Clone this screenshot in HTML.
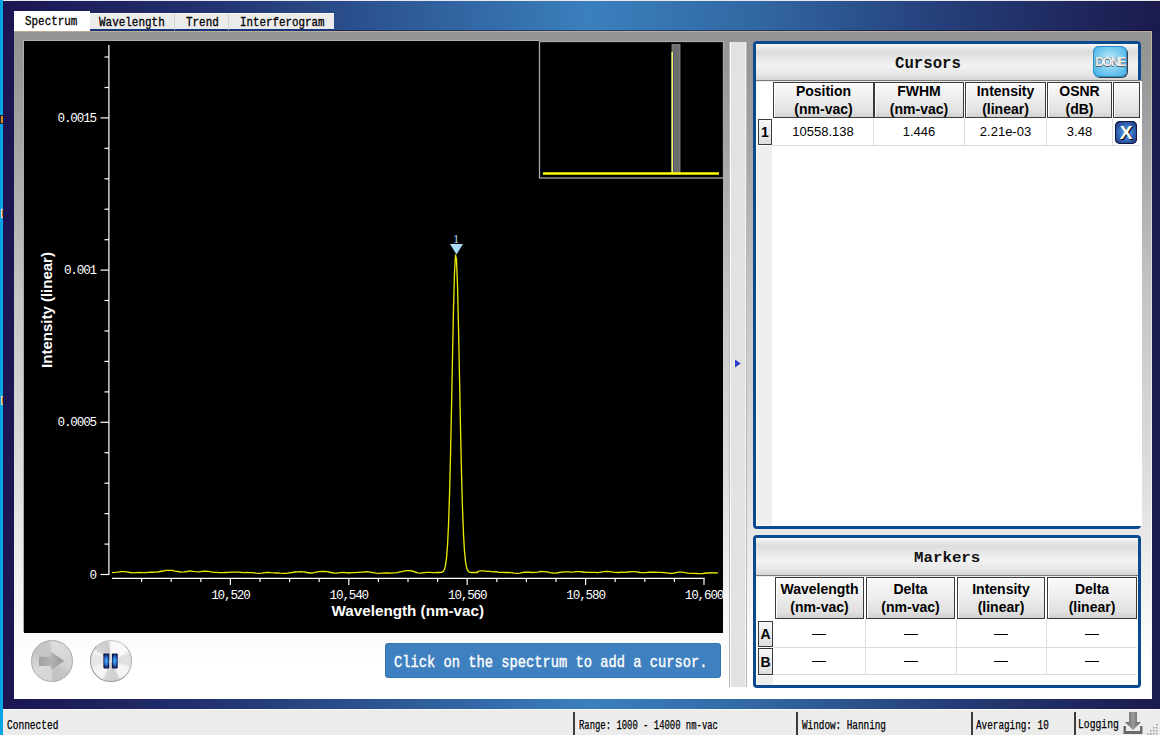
<!DOCTYPE html>
<html><head><meta charset="utf-8">
<style>
html,body{margin:0;padding:0;}
body{width:1160px;height:735px;position:relative;overflow:hidden;background:#1a1650;font-family:"Liberation Sans",sans-serif;}
.abs{position:absolute;}
.mt{position:absolute;font-family:"Liberation Mono",monospace;white-space:nowrap;transform-origin:0 0;}
#bg{left:0;top:0;width:1160px;height:735px;background:linear-gradient(to right,#1b1452 0px,#22306e 200px,#2c5592 380px,#3a80bd 590px,#3167a2 760px,#253d78 950px,#1b1a4c 1160px);}
.tab{position:absolute;top:13px;height:15px;background:#ebebeb;border-top:1px solid #fafafa;border-bottom:2px solid #16357a;}
.hb{position:absolute;box-sizing:border-box;border:1px solid #3a3a3a;background:linear-gradient(to bottom,#fafafa 0%,#ececec 50%,#e0e0e0 85%,#cfcfcf 100%);box-shadow:inset 1px 1px 0 #fff;font-weight:bold;font-size:14px;line-height:17.5px;text-align:center;color:#000;padding-top:0px;}
.rh{position:absolute;box-sizing:border-box;border:1px solid #3a3a3a;background:linear-gradient(to bottom,#f8f8f8,#dedede);font-weight:bold;font-size:14px;text-align:center;color:#000;}
.cell{position:absolute;font-size:13px;text-align:center;color:#000;}
.vl{position:absolute;width:1px;background:#dcdcdc;}
.hl{position:absolute;height:1px;background:#dcdcdc;}
.ph{position:absolute;background:linear-gradient(to bottom,#f4f4f4 0%,#dcdcdc 20%,#ececec 45%,#f2f2f2 60%,#e6e6e6 85%,#d4d4d4 100%);border-top:1px solid #fff8f0;}
.ssep{position:absolute;top:712px;width:2px;height:23px;background:#3c3c3c;}
svg text{font-family:"Liberation Mono",monospace;}
</style></head><body>
<div id="bg" class="abs"></div>
<div class="abs" style="left:0;top:0;width:1160px;height:1px;background:#e8e8ee;"></div>
<div class="abs" style="left:14px;top:30px;width:1139px;height:1px;background:rgba(0,0,40,0.45);"></div>
<div class="abs" style="left:0;top:0;width:3px;height:735px;background:#08a4e4;"></div>
<div class="abs" style="left:0;top:115px;width:3px;height:9px;background:#202020;"></div>
<div class="abs" style="left:1px;top:116px;width:2px;height:7px;background:#d08a30;"></div>
<div class="abs" style="left:1px;top:209px;width:2px;height:9px;background:#e8d8c0;"></div>
<div class="abs" style="left:2px;top:210px;width:1px;height:7px;background:#c87820;"></div>
<div class="abs" style="left:1px;top:396px;width:2px;height:9px;background:#e8d8c0;"></div>
<div class="abs" style="left:2px;top:397px;width:1px;height:7px;background:#c87820;"></div>

<!-- frame -->
<div class="abs" style="left:14px;top:31px;width:1138px;height:668px;background:linear-gradient(to bottom,#939393 0px,#979797 40px,#a8a8a8 130px,#c6c6c6 270px,#dedede 450px,#f2f2f2 560px,#ffffff 630px);"></div>
<div class="abs" style="left:14px;top:31px;width:1138px;height:1px;background:#b9ab98;"></div>
<div class="abs" style="left:1151px;top:31px;width:1px;height:668px;background:linear-gradient(to bottom,#c0b4a0,#d8d8d0 200px,#f8f8f8 500px);"></div>

<!-- tabs -->
<div class="abs" style="left:14px;top:11px;width:76px;height:20px;background:#fff;"></div>
<div class="tab" style="left:90px;width:84px;"></div>
<div class="tab" style="left:174px;width:54px;border-left:1px solid #d4d4d4;"></div>
<div class="tab" style="left:228px;width:105px;border-left:1px solid #d4d4d4;"></div>

<!-- chart -->
<div class="abs" style="left:24px;top:41px;width:699px;height:592px;background:#000;box-shadow:-1px -1px 0 #acacac;"></div>
<svg class="abs" style="left:0;top:0;" width="1160" height="735" viewBox="0 0 1160 735">
<g stroke="#ffffff" stroke-width="1.2" fill="none">
<line x1="108.9" y1="45" x2="108.9" y2="575"/>
<line x1="112" y1="578.4" x2="704.5" y2="578.4"/>
<line x1="100.5" y1="574.5" x2="109" y2="574.5"/>
<line x1="104.5" y1="544.1" x2="109" y2="544.1"/>
<line x1="104.5" y1="513.6" x2="109" y2="513.6"/>
<line x1="104.5" y1="483.2" x2="109" y2="483.2"/>
<line x1="104.5" y1="452.7" x2="109" y2="452.7"/>
<line x1="100.5" y1="422.3" x2="109" y2="422.3"/>
<line x1="104.5" y1="391.9" x2="109" y2="391.9"/>
<line x1="104.5" y1="361.4" x2="109" y2="361.4"/>
<line x1="104.5" y1="331.0" x2="109" y2="331.0"/>
<line x1="104.5" y1="300.5" x2="109" y2="300.5"/>
<line x1="100.5" y1="270.1" x2="109" y2="270.1"/>
<line x1="104.5" y1="239.7" x2="109" y2="239.7"/>
<line x1="104.5" y1="209.2" x2="109" y2="209.2"/>
<line x1="104.5" y1="178.8" x2="109" y2="178.8"/>
<line x1="104.5" y1="148.3" x2="109" y2="148.3"/>
<line x1="100.5" y1="117.9" x2="109" y2="117.9"/>
<line x1="104.5" y1="87.5" x2="109" y2="87.5"/>
<line x1="104.5" y1="57.0" x2="109" y2="57.0"/>
<line x1="141.6" y1="578" x2="141.6" y2="582"/>
<line x1="171.2" y1="578" x2="171.2" y2="582"/>
<line x1="200.8" y1="578" x2="200.8" y2="582"/>
<line x1="230.4" y1="578" x2="230.4" y2="585"/>
<line x1="260.0" y1="578" x2="260.0" y2="582"/>
<line x1="289.6" y1="578" x2="289.6" y2="582"/>
<line x1="319.2" y1="578" x2="319.2" y2="582"/>
<line x1="348.8" y1="578" x2="348.8" y2="585"/>
<line x1="378.4" y1="578" x2="378.4" y2="582"/>
<line x1="408.0" y1="578" x2="408.0" y2="582"/>
<line x1="437.6" y1="578" x2="437.6" y2="582"/>
<line x1="467.2" y1="578" x2="467.2" y2="585"/>
<line x1="496.8" y1="578" x2="496.8" y2="582"/>
<line x1="526.4" y1="578" x2="526.4" y2="582"/>
<line x1="556.0" y1="578" x2="556.0" y2="582"/>
<line x1="585.6" y1="578" x2="585.6" y2="585"/>
<line x1="615.2" y1="578" x2="615.2" y2="582"/>
<line x1="644.8" y1="578" x2="644.8" y2="582"/>
<line x1="674.4" y1="578" x2="674.4" y2="582"/>
<line x1="704.0" y1="578" x2="704.0" y2="585"/>
</g>
<g fill="#ffffff" font-size="12.6" letter-spacing="-1.15">
<text x="96" y="578.5" text-anchor="end">0</text>
<text x="96" y="426.3" text-anchor="end">0.0005</text>
<text x="96" y="274.1" text-anchor="end">0.001</text>
<text x="96" y="121.9" text-anchor="end">0.0015</text>
<text x="230.4" y="598.5" text-anchor="middle">10,520</text>
<text x="348.8" y="598.5" text-anchor="middle">10,540</text>
<text x="467.2" y="598.5" text-anchor="middle">10,560</text>
<text x="585.6" y="598.5" text-anchor="middle">10,580</text>
<text x="704.0" y="598.5" text-anchor="middle">10,600</text>
</g>
<text x="331.5" y="615.5" fill="#fff" textLength="152.5" lengthAdjust="spacingAndGlyphs" style="font-family:'Liberation Sans',sans-serif;font-weight:bold;font-size:15px;">Wavelength (nm-vac)</text>
<text transform="translate(52,310) rotate(-90)" text-anchor="middle" fill="#fff" style="font-family:'Liberation Sans',sans-serif;font-weight:bold;font-size:15px;">Intensity (linear)</text>
<polyline points="112.0,572.6 115.0,572.4 118.0,572.1 121.0,571.6 124.0,571.6 127.0,571.9 130.0,572.5 133.0,572.8 136.0,572.6 139.0,572.5 142.0,572.6 145.0,572.6 148.0,572.4 151.0,572.2 154.0,572.2 157.0,572.1 160.0,571.5 163.0,571.0 166.0,570.3 169.0,570.4 172.0,570.4 175.0,571.1 178.0,571.5 181.0,572.2 184.0,571.9 187.0,571.5 190.0,570.9 193.0,571.3 196.0,571.6 199.0,571.8 202.0,571.4 205.0,571.2 208.0,571.4 211.0,571.9 214.0,572.3 217.0,572.4 220.0,572.6 223.0,572.6 226.0,572.5 229.0,572.4 232.0,572.2 235.0,572.1 238.0,572.2 241.0,572.3 244.0,572.6 247.0,572.5 250.0,572.6 253.0,572.7 256.0,573.2 259.0,573.4 262.0,573.1 265.0,572.6 268.0,572.4 271.0,572.7 274.0,572.8 277.0,573.0 280.0,573.2 283.0,573.3 286.0,573.3 289.0,572.8 292.0,572.5 295.0,572.0 298.0,571.9 301.0,571.6 304.0,571.9 307.0,572.5 310.0,573.0 313.0,572.8 316.0,572.2 319.0,571.7 322.0,571.5 325.0,571.3 328.0,571.8 331.0,572.5 334.0,573.2 337.0,573.1 340.0,572.6 343.0,572.5 346.0,572.6 349.0,573.0 352.0,572.7 355.0,572.6 358.0,572.4 361.0,572.2 364.0,572.0 367.0,571.7 370.0,572.1 373.0,572.6 376.0,573.2 379.0,573.3 382.0,573.1 385.0,573.0 388.0,572.9 391.0,573.2 394.0,572.8 397.0,572.6 400.0,571.8 403.0,571.4 406.0,570.7 409.0,570.6 412.0,571.0 415.0,572.0 418.0,572.9 421.0,573.2 424.0,572.7 427.0,572.4 430.0,572.4 433.0,572.6 436.0,572.7 436.5,572.5 437.5,572.5 438.5,572.5 439.5,572.5 440.5,572.4 441.5,572.3 442.5,571.9 443.5,571.1 444.5,569.2 445.5,565.4 446.5,558.1 447.5,545.5 448.5,525.2 449.5,495.6 450.5,456.0 451.5,408.2 452.5,356.8 453.5,309.0 454.5,272.7 455.5,255.0 456.5,259.5 457.5,285.3 458.5,327.2 459.5,377.4 460.5,428.1 461.5,473.0 462.5,508.7 463.5,534.4 464.5,551.3 465.5,561.5 466.5,567.2 467.5,570.1 468.5,571.5 469.5,572.1 470.5,572.4 471.5,572.5 472.5,572.5 473.5,572.5 474.5,572.5 475.5,572.5 476.5,572.5 477.5,572.5 478.0,571.3 481.0,570.9 484.0,570.9 487.0,571.3 490.0,571.3 493.0,571.8 496.0,571.6 499.0,572.3 502.0,572.3 505.0,572.5 508.0,572.4 511.0,572.6 514.0,573.1 517.0,573.4 520.0,573.1 523.0,572.4 526.0,572.2 529.0,572.2 532.0,572.5 535.0,572.3 538.0,572.1 541.0,571.5 544.0,571.6 547.0,571.9 550.0,572.7 553.0,573.0 556.0,573.1 559.0,572.5 562.0,572.1 565.0,571.9 568.0,571.9 571.0,572.1 574.0,571.9 577.0,571.6 580.0,571.6 583.0,572.0 586.0,572.4 589.0,572.3 592.0,572.4 595.0,572.4 598.0,572.6 601.0,572.1 604.0,571.6 607.0,571.3 610.0,571.6 613.0,572.2 616.0,572.3 619.0,572.5 622.0,572.2 625.0,572.3 628.0,572.0 631.0,571.7 634.0,571.6 637.0,571.8 640.0,572.5 643.0,572.6 646.0,572.6 649.0,572.2 652.0,572.2 655.0,572.2 658.0,572.4 661.0,572.4 664.0,572.6 667.0,572.9 670.0,573.4 673.0,573.3 676.0,572.7 679.0,572.1 682.0,572.1 685.0,572.7 688.0,573.2 691.0,573.3 694.0,573.3 697.0,573.5 700.0,573.6 703.0,573.5 706.0,573.0 709.0,573.0 712.0,572.7 715.0,573.0 718.0,572.8" fill="none" stroke="#e8e800" stroke-width="1.35" stroke-linejoin="round"/>
<polygon points="450,244 463,244 456.5,254.5" fill="#a8ddf5"/>
<text x="456" y="242.8" text-anchor="middle" fill="#a8ddf5" style="font-family:'Liberation Serif',serif;font-size:12.5px;">1</text>
<rect x="538.5" y="38.5" width="185" height="2.5" fill="#939393"/>
<rect x="539.5" y="41.5" width="184" height="136.5" fill="#000" stroke="#a8a8a8" stroke-width="1.3"/>
<rect x="672" y="44.5" width="8" height="129" fill="#6c6c6c" stroke="#8c8c8c" stroke-width="0.8"/>
<line x1="672.2" y1="51.7" x2="672.2" y2="173" stroke="#f0f060" stroke-width="1.6"/>
<line x1="673.6" y1="51.7" x2="673.6" y2="173" stroke="#505078" stroke-width="1"/>
<line x1="543" y1="173.5" x2="719" y2="173.5" stroke="#ffff00" stroke-width="2.6"/>
</svg>

<!-- splitter -->
<div class="abs" style="left:730px;top:42px;width:14px;height:645px;background:#e2e2e2;border-left:1px solid #fafafa;border-right:1px solid #f4f4f4;box-shadow:-1px 0 0 #b8b8b8, 1px 0 0 #b8b8b8;"></div>
<svg class="abs" style="left:733px;top:357px;" width="10" height="13" viewBox="0 0 10 13"><polygon points="1.5,1.5 8.5,6.5 1.5,11.5" fill="#2a3ed0" stroke="#f4f0d8" stroke-width="1"/></svg>

<!-- controls -->
<div class="abs" style="left:31px;top:640px;width:41.5px;height:41.5px;border-radius:50%;box-sizing:border-box;border:1.3px solid #a9a9a9;background:conic-gradient(from 0deg,#dcdcdc 0deg,#d8d8d8 60deg,#d2d2d2 110deg,#c6c6c6 130deg,#c2c2c2 175deg,#d6d6d6 185deg,#dadada 240deg,#d0d0d0 270deg,#c4c4c4 300deg,#c6c6c6 350deg,#dcdcdc 360deg);"></div>
<svg class="abs" style="left:0;top:630px;" width="150" height="60" viewBox="0 630 150 60">
<defs>
<linearGradient id="garr" x1="0" x2="1"><stop offset="0" stop-color="#a0a0a0"/><stop offset="0.45" stop-color="#b4b4b4"/><stop offset="1" stop-color="#989898"/></linearGradient>
<radialGradient id="gbar" cx="50%" cy="50%" r="60%"><stop offset="0" stop-color="#48b8f8"/><stop offset="0.55" stop-color="#2a70c8"/><stop offset="1" stop-color="#0a1240"/></radialGradient>
</defs>
<polygon points="39,656.8 51.2,656.8 51.2,651.7 64.2,660.9 51.2,670 51.2,666 39,666" fill="url(#garr)"/>
</svg>
<div class="abs" style="left:90px;top:640px;width:41.5px;height:41.5px;border-radius:50%;box-sizing:border-box;border:1.3px solid #9a9a9a;border-top-color:#c8c8c8;border-right-color:#b0b0b0;background:conic-gradient(from 0deg,#f8f8f8 0deg,#fafafa 55deg,#e0e0e0 70deg,#dedede 100deg,#f6f6f6 115deg,#f4f4f4 150deg,#cfcfcf 160deg,#d4d4d4 195deg,#f6f6f6 210deg,#f2f2f2 245deg,#e6e6e6 260deg,#e8e8e8 290deg,#f4f4f4 300deg,#d4d4d4 310deg,#cccccc 350deg,#f8f8f8 360deg);"></div>
<svg class="abs" style="left:100px;top:650px;" width="22" height="22" viewBox="100 650 22 22">
<rect x="103.4" y="653.4" width="5.8" height="15" rx="0.8" fill="url(#gbar2)"/>
<rect x="111.9" y="653.4" width="5.8" height="15" rx="0.8" fill="url(#gbar2)"/>
<defs><radialGradient id="gbar2" cx="50%" cy="50%" r="55%" gradientTransform="translate(0.5,0.5) scale(1,1) translate(-0.5,-0.5)"><stop offset="0" stop-color="#50c0ff"/><stop offset="0.5" stop-color="#2a6ccc"/><stop offset="1" stop-color="#080c38"/></radialGradient></defs>
</svg>
<div class="abs" style="left:385px;top:643px;width:336px;height:35px;background:#3f81c0;border-radius:4px;box-shadow:inset 0 0 0 1px #3474b4;"></div>

<!-- Cursors panel -->
<div class="abs" style="left:753px;top:41px;width:382px;height:482px;border:3px solid #0a4a92;border-radius:4px;background:#fff;"></div>
<div class="abs" style="left:756px;top:80px;width:386px;height:446px;background:#fff;"></div>
<div class="abs" style="left:757px;top:146px;width:15px;height:379px;background:#efefef;"></div>
<div class="ph" style="left:756px;top:44px;width:382px;height:35px;"></div>
<div class="abs" style="left:756px;top:80px;width:386px;height:2px;background:#ececec;border-top:1px solid #7a7a7a;box-sizing:border-box;"></div>
<div class="abs" style="left:1093px;top:46px;width:34px;height:31px;border-radius:6px;background:radial-gradient(ellipse at 50% 45%,#c8ecfa 0%,#7fcdf0 45%,#3aaae6 100%);box-shadow:inset 0 0 0 1px #2a8fc8, 1px 1px 0 #404040;"></div>
<div class="abs" style="left:1095px;top:55px;width:30px;text-align:center;font-family:'Liberation Sans',sans-serif;font-size:12.5px;font-weight:bold;color:#f0f0f0;text-shadow:0 1px 0 #506070,-0.5px 0 #6a7a88,0.5px 0 #6a7a88;letter-spacing:-1.6px;line-height:14px;">DONE</div>
<div class="hb" style="left:773px;top:82px;width:101px;height:36px;">Position<br>(nm-vac)</div>
<div class="hb" style="left:874px;top:82px;width:90px;height:36px;">FWHM<br>(nm-vac)</div>
<div class="hb" style="left:965px;top:82px;width:81px;height:36px;">Intensity<br>(linear)</div>
<div class="hb" style="left:1047px;top:82px;width:65px;height:36px;">OSNR<br>(dB)</div>
<div class="hb" style="left:1113px;top:82px;width:27px;height:36px;"></div>
<div class="rh" style="left:758px;top:119px;width:14px;height:26px;line-height:25px;">1</div>
<div class="hl" style="left:772px;top:145px;width:368px;"></div>
<div class="vl" style="left:873px;top:118px;height:27px;"></div>
<div class="vl" style="left:964px;top:118px;height:27px;"></div>
<div class="vl" style="left:1046px;top:118px;height:27px;"></div>
<div class="vl" style="left:1112px;top:118px;height:27px;"></div>
<div class="cell" style="left:773px;top:124px;width:100px;line-height:15px;">10558.138</div>
<div class="cell" style="left:874px;top:124px;width:90px;line-height:15px;">1.446</div>
<div class="cell" style="left:965px;top:124px;width:81px;line-height:15px;">2.21e-03</div>
<div class="cell" style="left:1047px;top:124px;width:65px;line-height:15px;">3.48</div>
<div class="abs" style="left:1115px;top:121px;width:22px;height:23px;border-radius:5px;background:radial-gradient(ellipse at 50% 50%,#5aa0e8 0%,#3a70c0 45%,#15205a 100%);box-shadow:inset 0 0 0 1px #101848;"></div>
<div class="abs" style="left:1115px;top:123px;width:22px;text-align:center;font-family:'Liberation Sans',sans-serif;font-size:19px;font-weight:bold;color:#fff;line-height:20px;text-shadow:1px 1px 0 #000;">X</div>

<!-- Markers panel -->
<div class="abs" style="left:753px;top:535px;width:382px;height:147px;border:3px solid #0a4a92;border-radius:4px;background:#fff;"></div>
<div class="ph" style="left:756px;top:538px;width:382px;height:36px;"></div>
<div class="abs" style="left:756px;top:575px;width:382px;height:2px;background:#ececec;border-top:1px solid #7a7a7a;box-sizing:border-box;"></div>
<div class="hb" style="left:775px;top:577px;width:89px;height:42px;padding-top:3px;">Wavelength<br>(nm-vac)</div>
<div class="hb" style="left:866px;top:577px;width:89px;height:42px;padding-top:3px;">Delta<br>(nm-vac)</div>
<div class="hb" style="left:957px;top:577px;width:88px;height:42px;padding-top:3px;">Intensity<br>(linear)</div>
<div class="hb" style="left:1047px;top:577px;width:90px;height:42px;padding-top:3px;">Delta<br>(linear)</div>
<div class="abs" style="left:812px;top:634px;width:14px;height:1px;background:#000;"></div>
<div class="abs" style="left:812px;top:661px;width:14px;height:1px;background:#000;"></div>
<div class="abs" style="left:904px;top:634px;width:14px;height:1px;background:#000;"></div>
<div class="abs" style="left:904px;top:661px;width:14px;height:1px;background:#000;"></div>
<div class="abs" style="left:994px;top:634px;width:14px;height:1px;background:#000;"></div>
<div class="abs" style="left:994px;top:661px;width:14px;height:1px;background:#000;"></div>
<div class="abs" style="left:1085px;top:634px;width:14px;height:1px;background:#000;"></div>
<div class="abs" style="left:1085px;top:661px;width:14px;height:1px;background:#000;"></div>
<div class="rh" style="left:758px;top:621px;width:15px;height:26px;line-height:25px;">A</div>
<div class="rh" style="left:758px;top:648px;width:15px;height:27px;line-height:26px;">B</div>
<div class="abs" style="left:757px;top:676px;width:16px;height:9px;background:#efefef;"></div>
<div class="hl" style="left:773px;top:647px;width:364px;"></div>
<div class="hl" style="left:773px;top:674px;width:364px;"></div>
<div class="vl" style="left:865px;top:619px;height:56px;"></div>
<div class="vl" style="left:956px;top:619px;height:56px;"></div>
<div class="vl" style="left:1046px;top:619px;height:56px;"></div>

<!-- status bar -->
<div class="abs" style="left:3px;top:709px;width:1157px;height:26px;background:#ececec;border-top:1px solid #fafafa;box-sizing:border-box;"></div>
<div class="ssep" style="left:573px;"></div>
<div class="ssep" style="left:796px;"></div>
<div class="ssep" style="left:971px;"></div>
<div class="ssep" style="left:1074px;"></div>
<svg class="abs" style="left:1120px;top:710px;" width="40" height="25" viewBox="1120 710 40 25">
<defs><linearGradient id="gdl" x1="0" x2="1"><stop offset="0" stop-color="#5a5a5a"/><stop offset="0.5" stop-color="#9a9a9a"/><stop offset="1" stop-color="#5a5a5a"/></linearGradient></defs>
<polygon points="1129,712 1137,712 1137,722 1141,722 1133,730 1125,722 1129,722" fill="url(#gdl)"/>
<polygon points="1123.5,726 1126,726 1126,731 1140,731 1140,726 1142.5,726 1142.5,734 1123.5,734" fill="#6a6a6a"/>
<g fill="#9a9a9a"><rect x="1156" y="724" width="1.5" height="1.5"/><rect x="1153" y="727" width="1.5" height="1.5"/><rect x="1156" y="727" width="1.5" height="1.5"/><rect x="1150" y="730" width="1.5" height="1.5"/><rect x="1153" y="730" width="1.5" height="1.5"/><rect x="1156" y="730" width="1.5" height="1.5"/><rect x="1147" y="733" width="1.5" height="1.5"/><rect x="1150" y="733" width="1.5" height="1.5"/><rect x="1153" y="733" width="1.5" height="1.5"/><rect x="1156" y="733" width="1.5" height="1.5"/></g>
</svg>

<div class="mt" style="left:25.15px;top:14.50px;font-size:13.06px;line-height:13.06px;transform:scaleX(0.8360);font-weight:normal;color:#000;-webkit-text-stroke:0.3px #000;">Spectrum</div>
<div class="mt" style="left:98.55px;top:16.61px;font-size:12.90px;line-height:12.90px;transform:scaleX(0.8498);font-weight:normal;color:#000;-webkit-text-stroke:0.3px #000;">Wavelength</div>
<div class="mt" style="left:185.75px;top:16.61px;font-size:12.90px;line-height:12.90px;transform:scaleX(0.8471);font-weight:normal;color:#000;-webkit-text-stroke:0.3px #000;">Trend</div>
<div class="mt" style="left:240.46px;top:16.61px;font-size:12.90px;line-height:12.90px;transform:scaleX(0.8393);font-weight:normal;color:#000;-webkit-text-stroke:0.3px #000;">Interferogram</div>
<div class="mt" style="left:6.52px;top:719.88px;font-size:12.30px;line-height:12.30px;transform:scaleX(0.7748);font-weight:normal;color:#000;-webkit-text-stroke:0.25px #000;">Connected</div>
<div class="mt" style="left:578.55px;top:719.88px;font-size:12.30px;line-height:12.30px;transform:scaleX(0.7240);font-weight:normal;color:#000;-webkit-text-stroke:0.25px #000;">Range: 1000 - 14000 nm-vac</div>
<div class="mt" style="left:801.53px;top:719.88px;font-size:12.30px;line-height:12.30px;transform:scaleX(0.7584);font-weight:normal;color:#000;-webkit-text-stroke:0.25px #000;">Window: Hanning</div>
<div class="mt" style="left:976.13px;top:719.88px;font-size:12.30px;line-height:12.30px;transform:scaleX(0.7583);font-weight:normal;color:#000;-webkit-text-stroke:0.25px #000;">Averaging: 10</div>
<div class="mt" style="left:1078.21px;top:718.88px;font-size:12.30px;line-height:12.30px;transform:scaleX(0.7894);font-weight:normal;color:#000;-webkit-text-stroke:0.25px #000;">Logging</div>
<div class="mt" style="left:894.92px;top:54.67px;font-size:17.00px;line-height:17.00px;transform:scaleX(0.9223);font-weight:bold;color:#111;">Cursors</div>
<div class="mt" style="left:914.11px;top:550.64px;font-size:15.49px;line-height:15.49px;transform:scaleX(1.0191);font-weight:bold;color:#111;">Markers</div>
<div class="mt" style="left:394.21px;top:655.90px;font-size:15.79px;line-height:15.79px;transform:scaleX(0.8714);font-weight:normal;color:#fff;-webkit-text-stroke:0.35px #fff;">Click on the spectrum to add a cursor.</div>
</body></html>
